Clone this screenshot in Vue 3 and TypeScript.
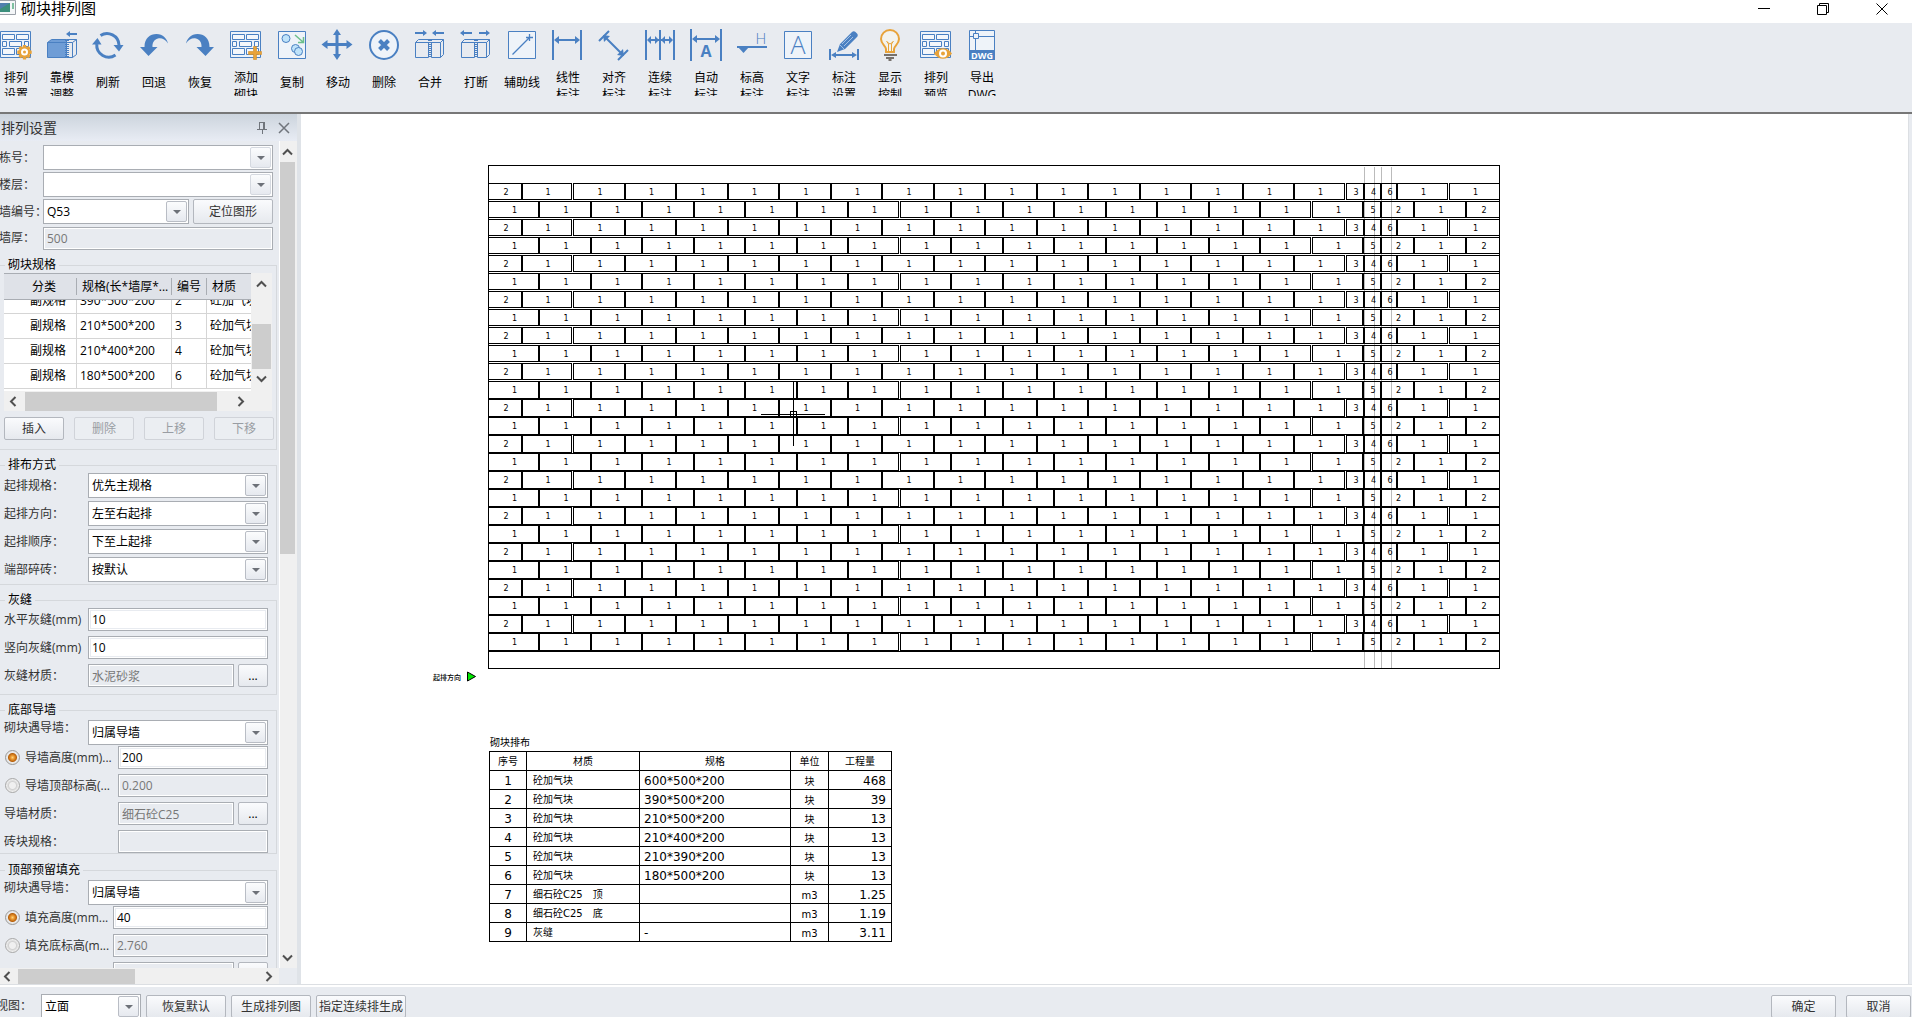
<script setup lang="ts">
import { ref } from 'vue'

interface Tool {
  icon: string
  lines: string[]
}

interface Brick {
  x: number
  w: number
  mark: string
}

interface Course {
  y: number
  h: number
  bricks: Brick[]
}

const blue = '#4a80c2'
const orange = '#e8a33a'

const brickPattern =
  `<path d="M.5 2.5h30v26H.5z" fill="#edf3fa" stroke="${blue}"/>` +
  `<path d="M2.5 5.5h12v5h-12zM16.5 5.5h12v5h-12zM2.5 12.5h4v5h-4zM9.5 12.5h12v5h-12zM24.5 12.5h4v5h-4zM2.5 19.5h12v6h-12zM16.5 19.5h12v6h-12z" fill="#f4f7fb" stroke="${blue}"/>`

const splitBlock =
  `<path d="M1.5 13.5h13v15h-13zM17.5 13.5h9v15h-9zM1.5 13.5l3-3h25v15l-3 3M26.5 13.5l3-3" fill="none" stroke="${blue}"/>` +
  `<path d="M15 11v17M17 11v17" stroke="${blue}" stroke-width="2" stroke-dasharray="1 1"/>`

const backArrow = `<path d="M6.500 18C6.500 9 12 5 18.500 5C25 5 29 10 30 14.500C27 10 23.500 8.800 20 9.500C16 10.500 14.200 14 14.500 18H19.500L10.500 27L2 18z" fill="${blue}"/>`

const glyphs: Record<string, string> = {
  arrange:
    brickPattern +
    `<path d="M23 16h3l.5 2.200 2-1.100 2 2-1.100 2 2.300.6v3l-2.300.5 1.100 2-2 2-2-1.100-.5 2.300h-3l-.5-2.300-2 1.100-2-2 1.100-2-2.300-.5v-3l2.300-.6-1.100-2 2-2 2 1.100z" fill="${orange}"/><circle cx="24.500" cy="23" r="3.500" fill="#fff"/><circle cx="24.500" cy="23" r="1.500" fill="${orange}"/>`,
  mould:
    `<path d="M1.500 13.500l4-3h15v18h-19z" fill="#6f9dd6" stroke="${blue}"/><path d="M1.500 13.500h19M20.500 13.500h6v15h-6zM20.500 10.500h10v15l-4 3M26.500 13.500l4-3" fill="none" stroke="${blue}"/><path d="M20 11v17M22 11v17" stroke="${blue}" stroke-width="2" stroke-dasharray="1 1"/><path d="M31 5H22" stroke="${blue}" stroke-width="2"/><path d="M20 5l4-3v6z" fill="${blue}"/>`,
  refresh:
    `<path d="M8.500 6.500A12 12 0 0 1 27 16M23.500 26A12 12 0 0 1 4.800 15" fill="none" stroke="${blue}" stroke-width="3"/><path d="M21.500 16h10l-4.500 6.500zM0 15.500h9.500L5.500 9z" fill="${blue}"/>`,
  undo: backArrow,
  redo: `<g transform="translate(32 0) scale(-1 1)">${backArrow}</g>`,
  add: brickPattern + `<path d="M23.500 17.500h3v5h5v3h-5v5h-3v-5h-5v-3h5z" fill="${orange}" stroke="#d48f28" stroke-width=".6"/>`,
  copy:
    `<path d="M2.500 2.500h27v27h-27z" fill="#eef3f9" stroke="${blue}"/><g fill="#bfe3fa" stroke="${blue}"><circle cx="10" cy="9.500" r="4"/><circle cx="19.500" cy="19.500" r="4"/><circle cx="22.500" cy="22.500" r="4"/></g><path d="M19 6l8 7M27.500 8v5.500H22" fill="none" stroke="#6cbf8b" stroke-width="1.500"/>`,
  move: `<path d="M15 0l4 6h-2.500v8h8V11l6 4.500-6 4.500v-3h-8v8H19l-4 6-4-6h2.500v-8h-8v3l-6-4.500 6-4.500v3h8V6H11z" fill="${blue}"/>`,
  remove: `<circle cx="16" cy="16" r="14" fill="#eef3f9" stroke="${blue}" stroke-width="2"/><path d="M11.500 11.500l9 9M20.500 11.500l-9 9" stroke="${blue}" stroke-width="4"/>`,
  merge: splitBlock + `<path d="M1 4h9M20 4h10" stroke="${blue}" stroke-width="2"/><path d="M13 4l-4-3v6zM18 4l4-3v6z" fill="${blue}"/>`,
  split: splitBlock + `<path d="M3 4h9M19 4h9" stroke="${blue}" stroke-width="2"/><path d="M0 4l4-3v6zM30 4l-4-3v6z" fill="${blue}"/>`,
  guide: `<path d="M2.500 2.500h27v27h-27z" fill="#eef3f9" stroke="${blue}"/><path d="M6.500 25.500L24 8M20 8.500h7M23.500 5v7" fill="none" stroke="${blue}" stroke-width="1.300"/>`,
  linear: `<path d="M1 1v30M29 1v30M4 11h22" stroke="${blue}" stroke-width="2"/><path d="M2 11l5-4v8zM28 11l-5-4v8z" fill="${blue}"/>`,
  aligned: `<path d="M1 12L11 2M20 31l10-10M7 8l17 17" stroke="${blue}" stroke-width="2"/><path d="M5 6l7 1-6 6zM26 27l-7-1 6-6z" fill="${blue}"/>`,
  chain: `<path d="M2 1v30M16 1v30M30 1v30M5 11h22" stroke="${blue}" stroke-width="2"/><path d="M3 11l4-4v8zM15 11l-4-4v8zM17 11l4-4v8zM29 11l-4-4v8z" fill="${blue}"/>`,
  auto: `<path d="M1 0v32M31 0v32M4 10h24" stroke="${blue}" stroke-width="2"/><path d="M2 10l5-4v8zM30 10l-5-4v8z" fill="${blue}"/><text x="16" y="28" text-anchor="middle" font-size="16" font-weight="700" fill="${blue}">A</text>`,
  level: `<path d="M1 18h30" stroke="${blue}" stroke-width="2"/><path d="M2 18h11l-5.500 6z" fill="${blue}"/><text x="25" y="15" text-anchor="middle" font-size="15" font-weight="300" fill="${blue}">H</text>`,
  text: `<path d="M2.500 2.500h27v27h-27z" fill="#eef3f9" stroke="${blue}"/><text x="16" y="25" text-anchor="middle" font-size="25" font-weight="300" fill="${blue}">A</text>`,
  edit: `<path d="M2 20v11M30 20v11M5 26h22" stroke="${blue}" stroke-width="2"/><path d="M3 26l5-3v6zM29 26l-5-3v6zM9 23l3-8L24 3c1-1 2.500-1 3.500 0l1.500 1.500c1 1 1 2.500 0 3.500L17 20z" fill="${blue}"/><path d="M14 15l9-9M16 17l9-9M12 16l4 4" stroke="#b9d0ec" stroke-width=".8" fill="none"/>`,
  bulb: `<path d="M12 23v-3c0-3-5-5-5-10a9 9 0 0 1 18 0c0 5-5 7-5 10v3z" fill="#f3f3ee" stroke="${orange}" stroke-width="2"/><path d="M12.500 12l2 3v7M19.500 12l-2 3v7M13 13l3 2 3-2" fill="none" stroke="${orange}"/><path d="M10 26h13M12 29h8M14.500 31h3" stroke="#77716c" stroke-width="2"/>`,
  preview: brickPattern + `<path d="M14 24.500c5-7 13-7 18 0c-5 7-13 7-18 0z" fill="${orange}"/><circle cx="23" cy="24.500" r="4" fill="#fff"/><circle cx="23" cy="24.500" r="2" fill="${orange}"/>`,
  dwg: `<path d="M3.500 1.500h25v29h-25z" fill="#eef3f9" stroke="${blue}"/><path d="M7.500 4.500h5v5h-5zM9.500 1v3M9.500 10v11M13 7.500h15M4 7.500h3" fill="none" stroke="${blue}"/><path d="M3 21h26v10H3z" fill="${blue}"/><text x="16" y="29.500" text-anchor="middle" font-size="9" font-weight="700" fill="#fff">DWG</text>`,
}

const tools: Tool[] = [
  { icon: 'arrange', lines: ['排列', '设置'] },
  { icon: 'mould', lines: ['靠模', '调整'] },
  { icon: 'refresh', lines: ['刷新'] },
  { icon: 'undo', lines: ['回退'] },
  { icon: 'redo', lines: ['恢复'] },
  { icon: 'add', lines: ['添加', '砌块'] },
  { icon: 'copy', lines: ['复制'] },
  { icon: 'move', lines: ['移动'] },
  { icon: 'remove', lines: ['删除'] },
  { icon: 'merge', lines: ['合并'] },
  { icon: 'split', lines: ['打断'] },
  { icon: 'guide', lines: ['辅助线'] },
  { icon: 'linear', lines: ['线性', '标注'] },
  { icon: 'aligned', lines: ['对齐', '标注'] },
  { icon: 'chain', lines: ['连续', '标注'] },
  { icon: 'auto', lines: ['自动', '标注'] },
  { icon: 'level', lines: ['标高', '标注'] },
  { icon: 'text', lines: ['文字', '标注'] },
  { icon: 'edit', lines: ['标注', '设置'] },
  { icon: 'bulb', lines: ['显示', '控制'] },
  { icon: 'preview', lines: ['排列', '预览'] },
  { icon: 'dwg', lines: ['导出', 'DWG'] },
]

const wallNo = ref('Q53')
const bottomMode = ref('height')
const topMode = ref('height')

const specs = [
  ['副规格', '390*500*200', '2', '砼加气块'],
  ['副规格', '210*500*200', '3', '砼加气块'],
  ['副规格', '210*400*200', '4', '砼加气块'],
  ['副规格', '180*500*200', '6', '砼加气块'],
]

const layoutRows = [
  { id: 'start-spec', label: '起排规格：', value: '优先主规格' },
  { id: 'start-dir', label: '起排方向：', value: '左至右起排' },
  { id: 'start-order', label: '起排顺序：', value: '下至上起排' },
  { id: 'end-brick', label: '端部碎砖：', value: '按默认' },
]

const quantities = [
  ['1', '砼加气块', '600*500*200', '块', '468'],
  ['2', '砼加气块', '390*500*200', '块', '39'],
  ['3', '砼加气块', '210*500*200', '块', '13'],
  ['4', '砼加气块', '210*400*200', '块', '13'],
  ['5', '砼加气块', '210*390*200', '块', '13'],
  ['6', '砼加气块', '180*500*200', '块', '13'],
  ['7', '细石砼C25\u3000顶', '', 'm3', '1.25'],
  ['8', '细石砼C25\u3000底', '', 'm3', '1.19'],
  ['9', '灰缝', '-', 'm3', '3.11'],
]

const WALL_WIDTH = 1011
const PITCH = 51.5

// Left edges of the bricks in one course, measured from the wall's left side.
const oddStarts = [0, ...Array.from({ length: 17 }, (_, i) => Math.round(33.8 + i * PITCH)), 876, 893, 909, 961]
const oddMarks = ['2', ...Array(16).fill('1'), '3', '4', '6', '1', '1']
const evenStarts = [...Array.from({ length: 18 }, (_, i) => Math.round(i * PITCH - 0.3)), 893, 926, 978]
const evenMarks = [...Array(17).fill('1'), '5', '2', '1', '2']

// Bricks whose left mortar joint is wide enough to be seen on screen.
const oddOpen = new Set([2, 17, 21])
const evenOpen = new Set([8, 16])

function makeCourse(starts: number[], marks: string[], open: Set<number>, row: number): Course {
  const bricks = starts.map((x, i) => {
    const last = i === starts.length - 1
    const end = last ? WALL_WIDTH : starts[i + 1] - (open.has(i + 1) ? 2 : 1)
    return { x, w: end - x, mark: marks[i] }
  })
  return { y: 18 + row * 18, h: row < 11 ? 16 : 17, bricks }
}

const courses: Course[] = Array.from({ length: 26 }, (_, row) =>
  row % 2 === 0 ? makeCourse(oddStarts, oddMarks, oddOpen, row) : makeCourse(evenStarts, evenMarks, evenOpen, row),
)
const guides = [876, 886, 893, 903]
</script>

<template>
  <div class="window">
    <header class="titlebar">
      <svg class="app-icon" width="16" height="16" viewBox="0 0 16 16" aria-hidden="true">
        <path d="M0 .5h15.500v14H0" fill="#f4f6f8" stroke="#9aa0a8" />
        <path d="M0 3h10v9H0z" fill="#3c8f7c" />
        <path d="M0 3h10l-10 6z" fill="#4f7fae" />
        <path d="M12 3h2v6h-2z" fill="#7fc0a0" />
      </svg>
      <h1>砌块排列图</h1>
      <div class="caption">
        <button type="button" aria-label="最小化"><svg width="12" height="12"><path d="M0 5.500h12" stroke="#000" /></svg></button>
        <button type="button" aria-label="还原"><svg width="12" height="12"><path d="M.5 2.500h9v9h-9zM2.500 2.500v-2h9v9h-2" fill="none" stroke="#000" /></svg></button>
        <button type="button" aria-label="关闭"><svg width="12" height="12"><path d="M.5.5l11 11M11.500.5l-11 11" stroke="#000" /></svg></button>
      </div>
    </header>

    <nav class="toolbar">
      <button v-for="(tool, i) in tools" :key="i" type="button" class="tool">
        <svg width="32" height="32" viewBox="0 0 32 32" aria-hidden="true" v-html="glyphs[tool.icon]"></svg>
        <span class="tool-label" :class="{ single: tool.lines.length === 1 }">
          <span v-for="line in tool.lines" :key="line">{{ line }}</span>
        </span>
      </button>
    </nav>

    <main class="workspace">
      <aside class="panel">
        <div class="panel-head">
          <h2>排列设置</h2>
          <button type="button" aria-label="固定"><svg width="12" height="12"><path d="M3 .5h6M3.500 0v7M8.500 0v7M7.500 0v7M1 7.500h10M6.500 7v5" fill="none" stroke="#70757c" /></svg></button>
          <button type="button" aria-label="关闭面板"><svg width="12" height="12"><path d="M1 1l10 10M11 1L1 11" stroke="#70757c" stroke-width="1.500" /></svg></button>
        </div>

        <div class="panel-body">
          <form class="form" @submit.prevent>
            <div class="basics">
              <label for="building">栋号：</label>
              <div class="combo idle"><select id="building"><option></option></select><i></i></div>
              <label for="floor">楼层：</label>
              <div class="combo idle"><select id="floor"><option></option></select><i></i></div>
              <label for="wall-no">墙编号：</label>
              <div class="pair">
                <div class="combo"><select id="wall-no" v-model="wallNo"><option>Q53</option></select><i></i></div>
                <button type="button" class="btn locate">定位图形</button>
              </div>
              <label for="thick">墙厚：</label>
              <input id="thick" class="field" value="500" disabled />
            </div>

            <fieldset>
              <legend>砌块规格</legend>
              <div class="spec">
                <div class="spec-view">
                  <table>
                    <thead>
                      <tr><th class="c-kind">分类</th><th class="c-size">规格(长*墙厚*...</th><th class="c-no">编号</th><th>材质</th></tr>
                    </thead>
                    <tbody>
                      <tr v-for="(row, r) in specs" :key="r" :class="{ partial: r === 0 }">
                        <td v-for="(cell, c) in row" :key="c"><div>{{ cell }}</div></td>
                      </tr>
                    </tbody>
                  </table>
                </div>
                <div class="vbar spec-v">
                  <svg width="11" height="8"><path d="M1 6.500l4.500-4.500L10 6.500" /></svg>
                  <b></b>
                  <svg width="11" height="8"><path d="M1 1.500l4.500 4.500L10 1.500" /></svg>
                </div>
                <div class="hbar spec-h">
                  <svg width="8" height="11"><path d="M6.500 1L2 5.500L6.500 10" /></svg>
                  <b></b>
                  <svg width="8" height="11"><path d="M1.500 1L6 5.500L1.500 10" /></svg>
                </div>
              </div>
              <div class="actions">
                <button type="button" class="btn">插入</button>
                <button type="button" class="btn" disabled>删除</button>
                <button type="button" class="btn" disabled>上移</button>
                <button type="button" class="btn" disabled>下移</button>
              </div>
            </fieldset>

            <fieldset class="tight">
              <legend>排布方式</legend>
              <div v-for="row in layoutRows" :key="row.id" class="row">
                <label :for="row.id">{{ row.label }}</label>
                <div class="combo"><select :id="row.id"><option>{{ row.value }}</option></select><i></i></div>
              </div>
            </fieldset>

            <fieldset class="joints">
              <legend>灰缝</legend>
              <div class="row"><label for="hj">水平灰缝(mm)</label><input id="hj" class="field" value="10" /></div>
              <div class="row"><label for="vj">竖向灰缝(mm)</label><input id="vj" class="field" value="10" /></div>
              <div class="row">
                <label for="jm">灰缝材质：</label>
                <div class="pair"><input id="jm" class="field" value="水泥砂浆" disabled /><button type="button" class="btn more">...</button></div>
              </div>
            </fieldset>

            <fieldset class="course">
              <legend>底部导墙</legend>
              <div class="row lead">
                <label for="bm">砌块遇导墙：</label>
                <div class="combo"><select id="bm"><option>归属导墙</option></select><i></i></div>
              </div>
              <div class="row wide">
                <label><input v-model="bottomMode" type="radio" name="bottom" value="height" />导墙高度(mm)...</label>
                <input class="field" aria-label="导墙高度" value="200" />
              </div>
              <div class="row wide">
                <label><input v-model="bottomMode" type="radio" name="bottom" value="level" />导墙顶部标高(...</label>
                <input class="field" aria-label="导墙顶部标高" value="0.200" disabled />
              </div>
              <div class="row wide">
                <label for="cm">导墙材质：</label>
                <div class="pair"><input id="cm" class="field" value="细石砼C25" disabled /><button type="button" class="btn more">...</button></div>
              </div>
              <div class="row wide"><label for="bs">砖块规格：</label><input id="bs" class="field" value="" disabled /></div>
            </fieldset>

            <fieldset class="course">
              <legend>顶部预留填充</legend>
              <div class="row lead">
                <label for="tm">砌块遇导墙：</label>
                <div class="combo"><select id="tm"><option>归属导墙</option></select><i></i></div>
              </div>
              <div class="row mid">
                <label><input v-model="topMode" type="radio" name="top" value="height" />填充高度(mm...</label>
                <input class="field" aria-label="填充高度" value="40" />
              </div>
              <div class="row mid">
                <label><input v-model="topMode" type="radio" name="top" value="level" />填充底标高(m...</label>
                <input class="field" aria-label="填充底标高" value="2.760" disabled />
              </div>
              <div class="row mid">
                <span></span>
                <div class="pair"><input class="field" aria-label="填充材质" value="" disabled /><button type="button" class="btn more" aria-label="选择填充材质"></button></div>
              </div>
            </fieldset>
          </form>
          <div class="vbar panel-v">
            <svg width="11" height="8"><path d="M1 6.500l4.500-4.500L10 6.500" /></svg>
            <b></b>
            <svg width="11" height="8"><path d="M1 1.500l4.500 4.500L10 1.500" /></svg>
          </div>
        </div>
        <div class="hbar panel-h">
          <svg width="8" height="11"><path d="M6.500 1L2 5.500L6.500 10" /></svg>
          <b></b>
          <svg width="8" height="11"><path d="M1.500 1L6 5.500L1.500 10" /></svg>
        </div>
      </aside>

      <section class="canvas">
        <svg class="drawing" width="1080" height="526" viewBox="0 0 1080 526">
          <g transform="translate(58.5 5.5)" class="wall">
            <path v-for="g in guides" :key="g" class="guide" :d="`M${g} 1V503`" />
            <rect x="0" y="0" width="1011" height="503" />
            <path d="M0 486H1011" />
            <g v-for="course in courses" :key="course.y">
              <rect v-for="(b, i) in course.bricks" :key="i" :x="b.x" :y="course.y" :width="b.w" :height="course.h" />
              <text v-for="(b, i) in course.bricks" :key="'t' + i" :x="b.x + b.w / 2 + 1" :y="course.y + 11">{{ b.mark }}</text>
            </g>
          </g>
          <g class="cursor">
            <path d="M331 254.500H395M363.500 222V286M360.500 251.500h6v6h-6z" />
          </g>
          <text class="direction" x="3" y="520">起排方向</text>
          <path d="M37.500 512v9l8-4.500z" fill="#00e800" stroke="#000" />
        </svg>

        <table class="bill">
          <caption>砌块排布</caption>
          <thead>
            <tr><th class="q-no">序号</th><th class="q-mat">材质</th><th class="q-size">规格</th><th class="q-unit">单位</th><th class="q-num">工程量</th></tr>
          </thead>
          <tbody>
            <tr v-for="q in quantities" :key="q[0]">
              <td v-for="(cell, c) in q" :key="c">{{ cell }}</td>
            </tr>
          </tbody>
        </table>
      </section>
    </main>

    <footer class="footer">
      <label for="view">视图：</label>
      <div class="combo view"><select id="view"><option>立面</option></select><i></i></div>
      <button type="button" class="btn b80">恢复默认</button>
      <button type="button" class="btn b80">生成排列图</button>
      <button type="button" class="btn b90">指定连续排生成</button>
      <span class="spacer"></span>
      <button type="button" class="btn b65">确定</button>
      <button type="button" class="btn b65 last">取消</button>
    </footer>
  </div>
</template>

<style>
body {
  margin: 0;
  overflow: hidden;
}
</style>

<style scoped>
.window,
.window * {
  box-sizing: border-box;
}
.window {
  display: flex;
  flex-direction: column;
  height: 100vh;
  overflow: hidden;
  background: #e8ebf0;
  color: #333;
  font: 12px/16px 'Open Sans', 'Noto Sans CJK SC', sans-serif;
}
button,
input,
select {
  margin: 0;
  font: inherit;
  color: inherit;
}
.titlebar {
  display: flex;
  flex: none;
  height: 23px;
  padding-right: 1px;
  background: #fff;
  color: #000;
}
.titlebar h1 {
  flex: 1;
  margin: 0 0 0 5px;
  font-size: 15px;
  font-weight: 400;
  line-height: 16px;
}
.caption {
  display: flex;
}
.caption button {
  width: 59px;
  height: 16px;
  padding: 2px 0 0;
  border: 0;
  background: none;
  line-height: 0;
}
.toolbar {
  display: flex;
  flex: none;
  height: 91px;
  padding-top: 6px;
  margin-left: -7px;
  border-bottom: 2px solid #777;
}
.tool {
  display: flex;
  flex-direction: column;
  align-items: center;
  flex: none;
  width: 46px;
  padding: 0;
  border: 0;
  background: none;
  color: #000;
}
.tool svg {
  overflow: visible;
  font-family: 'Open Sans', sans-serif;
}
.tool-label {
  display: flex;
  flex-direction: column;
  height: 27px;
  margin-top: 8px;
  overflow: hidden;
  line-height: 17px;
  white-space: nowrap;
}
.tool-label.single {
  padding-top: 5px;
}
.workspace {
  display: flex;
  flex: 1;
  min-height: 0;
}
.panel {
  display: flex;
  flex-direction: column;
  flex: none;
  width: 301px;
  border-right: 4px solid #dfe3e8;
}
.panel-head {
  display: flex;
  flex: none;
  align-items: center;
  height: 27px;
  padding-right: 2px;
  background: linear-gradient(#ccd4dd, #e8ecf4);
}
.panel-head h2 {
  flex: 1;
  margin: 0 0 0 1px;
  font-size: 14px;
  font-weight: 400;
}
.panel-head button {
  width: 22px;
  height: 16px;
  padding: 0;
  border: 0;
  background: none;
  line-height: 0;
}
.panel-body {
  display: flex;
  flex: 1;
  min-height: 0;
}
.form {
  flex: 1;
  min-width: 0;
  padding: 4px 2px 0 0;
  overflow: hidden;
}
.basics {
  display: grid;
  grid-template-columns: 43px 1fr;
  gap: 2px 0;
  align-items: center;
  padding: 0 4px 0 0;
}
.basics label {
  margin-left: -1px;
  white-space: nowrap;
}
.basics > .field {
  margin-top: 1px;
}
.pair {
  display: flex;
  gap: 4px;
  min-width: 0;
}
.pair > :first-child {
  flex: 1;
  min-width: 0;
}
.combo {
  position: relative;
  height: 25px;
}
.combo select {
  display: block;
  width: 100%;
  height: 100%;
  padding: 0 24px 0 3px;
  border: 1px solid #a9adb3;
  border-radius: 0;
  background: #fff;
  color: #000;
  appearance: none;
}
.combo i {
  position: absolute;
  top: 2px;
  right: 2px;
  width: 21px;
  height: 21px;
  border: 1px solid #b9bdc5;
  border-radius: 2px;
  background: linear-gradient(#fbfcfd, #e6e9ef);
  pointer-events: none;
}
.combo.idle i {
  border-color: #d5d9e0;
}
.combo i::after {
  content: '';
  position: absolute;
  top: 8px;
  left: 6px;
  border: 4px solid transparent;
  border-top-color: #6d7178;
  border-bottom: 0;
}
.btn {
  height: 23px;
  padding: 0;
  border: 1px solid #b3b7be;
  border-radius: 2px;
  background: linear-gradient(#fafbfd, #e6e9ee);
  white-space: nowrap;
}
.btn:disabled {
  border-color: #d0d3d9;
  background: #ebeef2;
  color: #999da3;
}
.locate {
  width: 80px;
  height: 25px;
}
.more {
  flex: none;
  width: 30px;
  color: #000;
}
.field {
  width: 100%;
  height: 23px;
  padding: 0 3px;
  border: 1px solid #a9adb3;
  border-radius: 0;
  background: #fff;
  box-shadow: inset 0 0 0 1px #fff, inset 0 0 0 2px #e8ebf0;
  color: #000;
}
.field:disabled {
  background: #e8ebf0;
  color: #777;
}
fieldset {
  min-width: 0;
  margin: 7px 0 0;
  padding: 0 0 0 4px;
  border: 1px solid #d5d8dc;
  border-left: 0;
}
legend {
  margin-left: 1px;
  padding: 0 3px;
  color: #000;
}
.spec {
  display: grid;
  grid-template-columns: 247px 21px;
  grid-template-rows: 118px 20px;
}
.spec-view {
  overflow: hidden;
  background: #fff;
}
.spec-view table {
  width: 247px;
  table-layout: fixed;
  border-spacing: 0;
  color: #000;
}
.spec-view th {
  height: 27px;
  padding: 1px 0 0 6px;
  border-top: 1px solid #a9adb3;
  border-bottom: 1px solid #a9adb3;
  background: #dfe2e8;
  font-weight: 400;
  text-align: left;
  white-space: nowrap;
}
.spec-view th + th {
  background: linear-gradient(#a9adb3, #a9adb3) 0 4px / 1px 17px no-repeat #dfe2e8;
}
.spec-view .c-kind {
  width: 72px;
  padding-left: 28px;
}
.spec-view .c-size {
  width: 95px;
}
.spec-view .c-no {
  width: 35px;
}
.spec-view td {
  height: 25px;
  padding: 0 0 0 3px;
  border-left: 1px solid #d5d5d5;
  border-bottom: 1px solid #d5d5d5;
  white-space: nowrap;
  overflow: hidden;
}
.spec-view td:first-child {
  padding: 0 0 0 26px;
  border-left: 0;
}
.spec-view .partial td {
  height: 14px;
}
.partial div {
  display: flex;
  align-items: flex-end;
  height: 13px;
  overflow: hidden;
  line-height: 24px;
}
.vbar,
.hbar {
  display: flex;
  align-items: center;
  background: #f0f0f0;
}
.vbar {
  flex-direction: column;
}
.vbar svg,
.hbar svg {
  flex: none;
  fill: none;
  stroke: #505050;
  stroke-width: 2;
}
.vbar b,
.hbar b {
  background: #cdcdcd;
}
.vbar svg:last-child {
  margin-top: auto;
}
.hbar svg:last-child {
  margin-left: auto;
}
.spec-v {
  padding: 7px 0 8px;
}
.spec-v b {
  width: 19px;
  height: 45px;
  margin-top: 36px;
}
.spec-h {
  grid-column: 1 / 3;
  padding: 0 27px 0 5px;
}
.spec-h b {
  width: 192px;
  height: 19px;
  margin-left: 8px;
}
.panel-v {
  flex: none;
  width: 18px;
  padding: 7px 2px 6px 0;
  border-left: 1px solid #fff;
}
.panel-v b {
  width: 15px;
  height: 392px;
  margin-top: 6px;
}
.panel-h {
  flex: none;
  width: 279px;
  height: 16px;
  padding: 0 6px 0 3px;
}
.panel-h b {
  width: 117px;
  height: 15px;
  margin-left: 7px;
}
.actions {
  display: flex;
  gap: 10px;
  padding: 6px 0 9px;
}
.actions .btn {
  flex: none;
  width: 60px;
}
.row {
  display: grid;
  grid-template-columns: 84px 180px;
  align-items: center;
  white-space: nowrap;
}
.row + .row {
  margin-top: 5px;
}
.tight {
  padding-bottom: 2px;
}
.tight .row + .row {
  margin-top: 3px;
}
.joints {
  padding-bottom: 7px;
}
.course {
  padding-top: 2px;
}
.course + .course {
  margin-top: 8px;
}
.row.wide {
  grid-template-columns: 114px 150px;
}
.row.mid {
  grid-template-columns: 109px 155px;
}
.lead label {
  align-self: start;
}
.row.lead + .row {
  margin-top: 1px;
}
.row label {
  display: flex;
  align-items: center;
}
input[type='radio'] {
  width: 15px;
  height: 15px;
  margin: 0 5px 0 1px;
  border: 1px solid #a7a7a7;
  border-radius: 50%;
  background: radial-gradient(circle, #f0f0f0 0 3px, #d2d2d2 4px, #eee 6px);
  appearance: none;
}
input[type='radio']:checked {
  border-color: #999;
  background: radial-gradient(circle at 50% 50%, #ffd47a 0, #e8952e 2px, #b8610c 4px, #e8e8e8 5px);
}
.canvas {
  flex: 1;
  min-width: 0;
  margin-right: 3px;
  padding: 46px 0 0 129px;
  border-right: 1px solid #dcdfe3;
  background: #fff;
  overflow: hidden;
}
.drawing {
  display: block;
}
.wall {
  fill: none;
  stroke: #000;
  shape-rendering: crispEdges;
}
.wall .guide {
  stroke: #bbb;
}
.wall text {
  fill: #000;
  stroke: none;
  font: 8px 'DejaVu Sans', sans-serif;
  text-anchor: middle;
}
.cursor {
  fill: none;
  stroke: #000;
  shape-rendering: crispEdges;
}
.direction {
  fill: #000;
  font: 500 7px 'Noto Sans CJK SC', sans-serif;
}
.bill {
  width: 403px;
  margin: 47px 0 0 59px;
  border-collapse: collapse;
  table-layout: fixed;
  color: #000;
  font: 12px/16px 'DejaVu Sans', 'Noto Sans CJK SC', sans-serif;
}
.bill caption {
  height: 18px;
  padding: 2px 0 0 1px;
  font-size: 10px;
  text-align: left;
}
.bill th,
.bill td {
  height: 19px;
  padding: 2px 5px 0 4px;
  border: 1px solid #000;
  line-height: 15px;
  white-space: nowrap;
}
.bill th {
  padding: 0;
  font-size: 10px;
  font-weight: 400;
}
.bill td:nth-child(1),
.bill td:nth-child(4) {
  padding: 2px 0 0;
  text-align: center;
}
.bill td:nth-child(2) {
  padding: 0 0 0 6px;
  font-size: 10px;
}
.bill td:nth-child(4) {
  font-size: 10px;
}
.bill td:nth-child(5) {
  text-align: right;
}
.q-no {
  width: 37px;
}
.q-mat {
  width: 113px;
}
.q-size {
  width: 151px;
}
.q-unit {
  width: 38px;
}
.footer {
  display: flex;
  flex: none;
  gap: 5px;
  height: 33px;
  padding-top: 9px;
  border-top: 1px solid #dcdfe3;
  box-shadow: inset 0 2px #fff;
  overflow: hidden;
}
.footer label {
  flex: none;
  width: 40px;
  margin-left: -4px;
  padding-top: 4px;
}
.footer .btn {
  flex: none;
  margin-top: 1px;
}
.combo.view {
  flex: none;
  width: 100px;
}
.b80 {
  width: 80px;
}
.b90 {
  width: 90px;
}
.b65 {
  width: 65px;
}
.footer .last {
  margin-right: 1px;
  margin-left: 5px;
}
.spacer {
  flex: 1;
}
</style>
